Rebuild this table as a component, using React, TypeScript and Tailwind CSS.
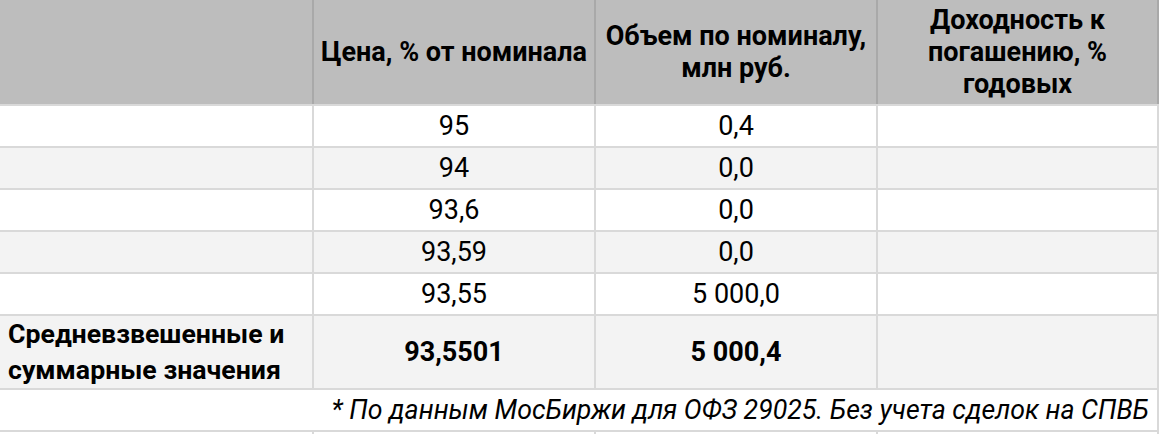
import React from 'react';

const rows = [
  { price: '95', volume: '0,4' },
  { price: '94', volume: '0,0' },
  { price: '93,6', volume: '0,0' },
  { price: '93,59', volume: '0,0' },
  { price: '93,55', volume: '5 000,0' },
];

const cell = 'border-2 border-[#d9d9d9] px-2 text-center align-middle';

export default function App() {
  return (
    <div className="w-[1160px] h-[434px] overflow-hidden bg-white font-['Roboto',sans-serif] text-[27px] leading-[32px] text-black">
      <table className="w-[1158px] table-fixed border-collapse">
        <colgroup>
          <col className="w-[313px]" />
          <col className="w-[282px]" />
          <col className="w-[282px]" />
          <col className="w-[281px]" />
        </colgroup>
        <thead>
          <tr className="h-[105px] bg-[#bdbdbd] font-bold">
            <th className="border-2 border-[#a9a9a9] border-t-0 border-l-0 border-b-[#d9d9d9]"></th>
            <th className="border-2 border-[#a9a9a9] border-t-0 border-b-[#d9d9d9] px-0 whitespace-nowrap">Цена, % от номинала</th>
            <th className="border-2 border-[#a9a9a9] border-t-0 border-b-[#d9d9d9] px-2">Объем по номиналу, млн руб.</th>
            <th className="border-2 border-[#a9a9a9] border-t-0 border-b-[#d9d9d9] px-4">Доходность к погашению, % годовых</th>
          </tr>
        </thead>
        <tbody>
          {rows.map((r, i) => (
            <tr key={i} className={`h-[42px] ${i % 2 === 1 ? 'bg-[#f3f3f3]' : 'bg-white'}`}>
              <td className={`${cell} border-l-0`}></td>
              <td className={cell}>{r.price}</td>
              <td className={cell}>{r.volume}</td>
              <td className={cell}></td>
            </tr>
          ))}
          <tr className="h-[73px] bg-[#f3f3f3] font-bold leading-[36px]">
            <td className={`${cell} border-l-0 text-left whitespace-nowrap text-[26.7px]`}>Средневзвешенные и<br />суммарные значения</td>
            <td className={cell}>93,5501</td>
            <td className={cell}>5 000,4</td>
            <td className={cell}></td>
          </tr>
          <tr className="h-[42px] bg-white">
            <td colSpan={4} className="border-2 border-[#d9d9d9] border-l-0 px-2 text-right italic whitespace-nowrap text-[26.7px]">
              * По данным МосБиржи для ОФЗ 29025. Без учета сделок на СПВБ
            </td>
          </tr>
          <tr className="h-[42px] bg-white">
            <td className={`${cell} border-l-0`}></td>
            <td className={cell}></td>
            <td className={cell}></td>
            <td className={cell}></td>
          </tr>
        </tbody>
      </table>
    </div>
  );
}
